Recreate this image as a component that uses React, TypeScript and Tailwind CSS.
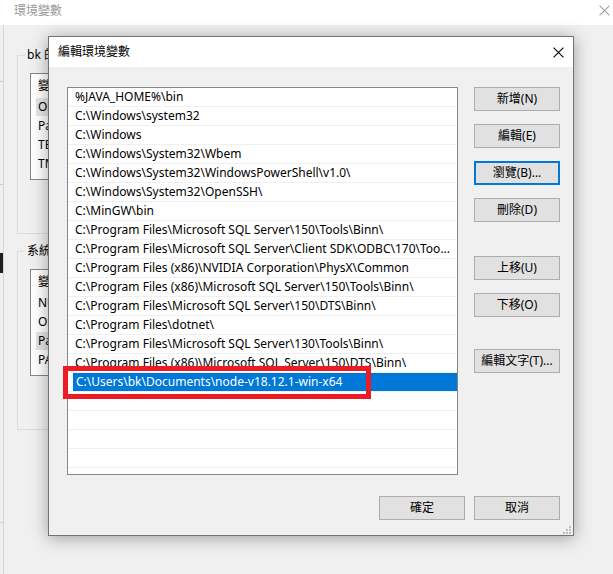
import React from "react";

const font = { fontFamily: '"Noto Sans", "Noto Sans CJK TC", sans-serif' };

const paths = [
  "%JAVA_HOME%\\bin",
  "C:\\Windows\\system32",
  "C:\\Windows",
  "C:\\Windows\\System32\\Wbem",
  "C:\\Windows\\System32\\WindowsPowerShell\\v1.0\\",
  "C:\\Windows\\System32\\OpenSSH\\",
  "C:\\MinGW\\bin",
  "C:\\Program Files\\Microsoft SQL Server\\150\\Tools\\Binn\\",
  "C:\\Program Files\\Microsoft SQL Server\\Client SDK\\ODBC\\170\\Too...",
  "C:\\Program Files (x86)\\NVIDIA Corporation\\PhysX\\Common",
  "C:\\Program Files (x86)\\Microsoft SQL Server\\150\\Tools\\Binn\\",
  "C:\\Program Files\\Microsoft SQL Server\\150\\DTS\\Binn\\",
  "C:\\Program Files\\dotnet\\",
  "C:\\Program Files\\Microsoft SQL Server\\130\\Tools\\Binn\\",
  "C:\\Program Files (x86)\\Microsoft SQL Server\\150\\DTS\\Binn\\",
];

const editing = "C:\\Users\\bk\\Documents\\node-v18.12.1-win-x64";

const userVars = ["OneDrive", "Path", "TEMP", "TMP"];
const sysVars = ["NUMBER_OF_PROCESSORS", "OS", "Path", "PATHEXT"];

function CloseIcon({ color, size }: { color: string; size: number }) {
  return (
    <svg width={size} height={size} viewBox="0 0 10 10" fill="none">
      <path d="M0.5 0.5L9.5 9.5M9.5 0.5L0.5 9.5" stroke={color} strokeWidth="1" />
    </svg>
  );
}

function Button({ label, focused }: { label: string; focused?: boolean }) {
  return (
    <div
      className={`flex h-[24px] w-[86px] items-center justify-center bg-[#e1e1e1] text-[12px] text-black ${
        focused ? "border-2 border-[#0078d7]" : "border border-[#adadad]"
      }`}
    >
      {label}
    </div>
  );
}

function VarList({ items, selected }: { items: string[]; selected: number }) {
  return (
    <div className="ml-[12px] h-[107px] w-[200px] overflow-hidden whitespace-nowrap border border-[#828790] bg-white text-[12px]">
      <div className="h-[24px] pl-[7px] leading-[24px]">變數</div>
      {items.map((v, i) => (
        <div key={v} className="h-[19px] pl-[5px]">
          <div
            className={`h-[18px] pl-[2px] leading-[18px] ${i === selected ? "bg-[#e5e5e5]" : ""}`}
          >
            {v}
          </div>
        </div>
      ))}
    </div>
  );
}

function Group({ title, items, selected }: { title: string; items: string[]; selected: number }) {
  return (
    <fieldset className="h-[187px] w-[240px] border border-[#dcdcdc]">
      <legend className="ml-[7px] whitespace-nowrap px-[2px] text-[12px] leading-[16px] text-black">{title}</legend>
      <div className="pt-[10px]">
        <VarList items={items} selected={selected} />
      </div>
    </fieldset>
  );
}

export default function App() {
  return (
    <div className="relative h-[574px] w-[613px] overflow-hidden bg-[#f0f0f0]" style={font}>
      {/* background window */}
      <div className="flex h-[25px] items-center justify-between bg-white pb-[4px] pl-[14px] pr-[3px]">
        <span className="text-[12px] text-[#999999]">環境變數</span>
        <CloseIcon color="#a0a0a0" size={11} />
      </div>
      <div className="flex h-[549px]">
        <div className="flex w-[3px] flex-col">
          <div className="h-[56px]" />
          <div className="h-px bg-[#cfcfcf]" />
          <div className="h-[102px]" />
          <div className="h-px bg-[#cfcfcf]" />
          <div className="h-[68px]" />
          <div className="h-[20px] bg-[#1f1f1f]" />
          <div className="h-[249px]" />
          <div className="h-px bg-[#cfcfcf]" />
        </div>
        <div className="flex w-[53px] flex-col gap-[9px] overflow-hidden border-l border-[#d5d5d5] pl-[13px] pt-[22px]">
          <Group title="bk 的使用者變數(U)" items={userVars} selected={0} />
          <Group title="系統變數(S)" items={sysVars} selected={2} />
        </div>
      </div>

      {/* edit dialog */}
      <div className="absolute left-[48px] top-[36px] flex h-[500px] w-[526px] flex-col border border-[#737373] bg-[#f0f0f0] shadow-[0_2px_16px_rgba(0,0,0,0.35)]">
        <div className="flex h-[30px] items-center justify-between bg-white pl-[9px] pr-[9px]">
          <span className="text-[12px] text-black">編輯環境變數</span>
          <CloseIcon color="#000000" size={11} />
        </div>
        <div className="flex flex-col pl-[18px] pr-[13px] pt-[20px]">
          <div className="flex gap-[16px]">
            <div className="h-[388px] w-[391px] overflow-hidden border border-[#828790] bg-white text-[12px] text-black">
              {paths.map((p, i) => (
                <div
                  key={i}
                  className="h-[19px] overflow-hidden whitespace-nowrap border-b border-[#f0f0f0] pl-[7px] leading-[18px]"
                >
                  {p}
                </div>
              ))}
              <div className="h-[19px] border-b border-[#f0f0f0] pl-[5px]">
                <div className="h-[18px] whitespace-nowrap bg-[#0078d7] pl-[3px] leading-[18px] text-white">
                  {editing}
                </div>
              </div>
              {[0, 1, 2, 3, 4].map((i) => (
                <div key={i} className="h-[19px] border-b border-[#f0f0f0]" />
              ))}
            </div>
            <div className="flex flex-col">
              <Button label="新增(N)" />
              <div className="mt-[13px]">
                <Button label="編輯(E)" />
              </div>
              <div className="mt-[13px]">
                <Button label="瀏覽(B)..." focused />
              </div>
              <div className="mt-[13px]">
                <Button label="刪除(D)" />
              </div>
              <div className="mt-[34px]">
                <Button label="上移(U)" />
              </div>
              <div className="mt-[13px]">
                <Button label="下移(O)" />
              </div>
              <div className="mt-[32px]">
                <Button label="編輯文字(T)..." />
              </div>
            </div>
          </div>
          <div className="mt-[21px] flex justify-end gap-[9px]">
            <Button label="確定" />
            <Button label="取消" />
          </div>
        </div>
        <svg className="absolute bottom-[1px] right-[2px]" width="8" height="8" viewBox="0 0 8 8">
          <rect x="6" y="0" width="2" height="2" fill="#bcbcbc" />
          <rect x="3" y="3" width="2" height="2" fill="#bcbcbc" />
          <rect x="6" y="3" width="2" height="2" fill="#bcbcbc" />
          <rect x="0" y="6" width="2" height="2" fill="#bcbcbc" />
          <rect x="3" y="6" width="2" height="2" fill="#bcbcbc" />
          <rect x="6" y="6" width="2" height="2" fill="#bcbcbc" />
        </svg>
      </div>

      {/* highlight annotation */}
      <div className="pointer-events-none absolute left-[63px] top-[366px] h-[33px] w-[308px] border-[5px] border-[#ed1c24]" />
    </div>
  );
}
